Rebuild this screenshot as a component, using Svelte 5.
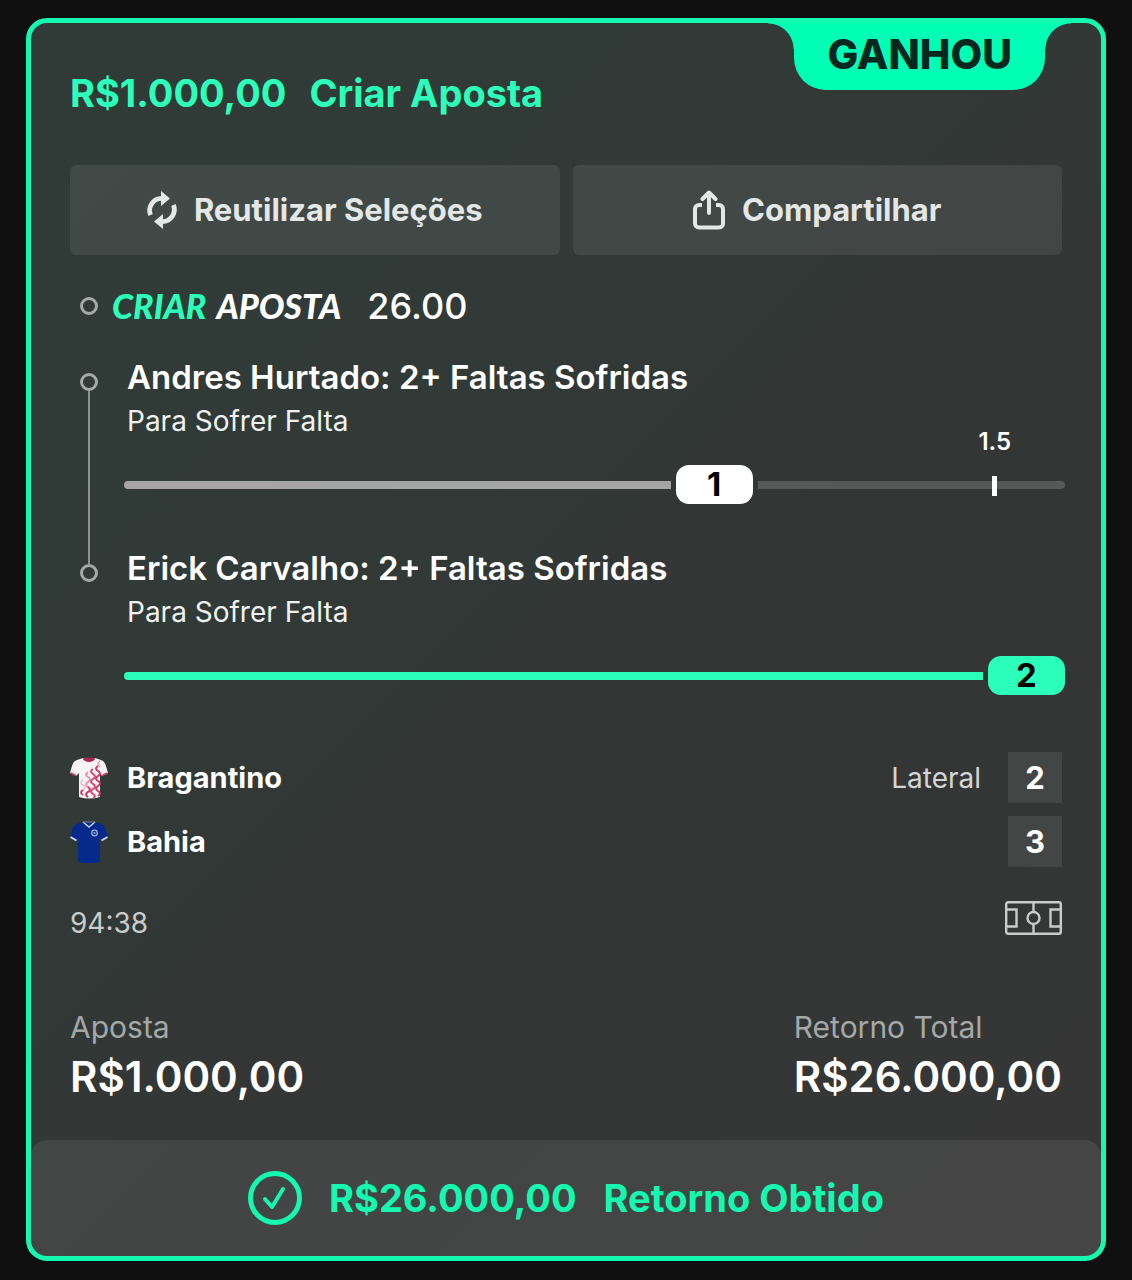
<script lang="ts">
  interface Selection {
    title: string;
    market: string;
    value: number;
    progress: number;
    won: boolean;
    line?: { label: string; position: number };
  }

  const selections: Selection[] = [
    {
      title: 'Andres Hurtado: 2+ Faltas Sofridas',
      market: 'Para Sofrer Falta',
      value: 1,
      progress: 64,
      won: false,
      line: { label: '1.5', position: 77 }
    },
    {
      title: 'Erick Carvalho: 2+ Faltas Sofridas',
      market: 'Para Sofrer Falta',
      value: 2,
      progress: 100,
      won: true
    }
  ];

  const stake = 'R$1.000,00';
  const returns = 'R$26.000,00';
</script>

<article class="bet-card">
  <div class="status-tab">GANHOU</div>

  <div class="content">
    <h1 class="heading">
      <span>{stake}</span>
      <span>Criar Aposta</span>
    </h1>

    <div class="actions">
      <button type="button" class="action">
        <svg class="icon-reuse" viewBox="0 0 30 38" aria-hidden="true">
          <g fill="none" stroke="currentColor" stroke-width="4.800">
            <path d="M3.600 24A12 12 0 0 1 15 7.400" />
            <path d="M26.400 14A12 12 0 0 1 15 30.600" />
          </g>
          <path d="M14 0l9 7.500-9 7.500zM16 23v15l-9-7.500z" fill="currentColor" />
        </svg>
        Reutilizar Seleções
      </button>
      <button type="button" class="action">
        <svg
          class="icon-share"
          viewBox="0 0 32 40"
          fill="none"
          stroke="currentColor"
          stroke-width="4"
          stroke-linecap="round"
          stroke-linejoin="round"
          aria-hidden="true"
        >
          <path d="M9 15H6a4 4 0 0 0-4 4v14.500a4 4 0 0 0 4 4h20a4 4 0 0 0 4-4V19a4 4 0 0 0-4-4h-3" stroke-linecap="butt" />
          <path d="M16 23V3.500M9.500 9L16 2.500 22.500 9" />
        </svg>
        Compartilhar
      </button>
    </div>

    <div class="builder">
      <span class="rail"><span class="dot"></span></span>
      <span class="builder-logo"><em>CRIAR</em> <span>APOSTA</span></span>
      <span class="odds">26.00</span>
    </div>

    <ul class="selections">
      {#each selections as selection}
        <li class="selection">
          <div class="rail">
            <span class="dot"></span>
            <span class="rail-line"></span>
          </div>
          <div class="selection-body">
            <h2>{selection.title}</h2>
            <p>{selection.market}</p>
            <div class="meter" class:won={selection.won}>
              <span class="meter-fill" style="flex-grow: {selection.progress}"></span>
              <span class="meter-value">{selection.value}</span>
              {#if selection.progress < 100}
                <span class="meter-rest" style="flex-grow: {100 - selection.progress}">
                  {#if selection.line}
                    <span class="meter-mark" style="left: {selection.line.position}%">
                      <span class="meter-label">{selection.line.label}</span>
                    </span>
                  {/if}
                </span>
              {/if}
            </div>
          </div>
        </li>
      {/each}
    </ul>

    <div class="teams">
      <div class="team">
        <svg class="shirt" viewBox="0 0 38 42" aria-hidden="true">
          <path d="M13 1h12l6 2c3 1 4 3 5 6l2 7-6 3-2-3v24q-11 3-21 0V16l-3 3-6-3 2-7c1-3 2-5 5-6z" fill="#f8f3f4" />
          <path d="M12.500 1.500c2 4.500 11 4.500 13 0Q19-.5 12.500 1.500z" fill="#a9284b" />
          <path d="M.5 16l5.500 2.500M37.500 16L32 18.500" stroke="#d13b62" stroke-width="1.500" />
          <g fill="none">
            <path d="M13 23q-4 2.500 0 5t0 5 0 5" stroke="#f3bccb" stroke-width="1.500" />
            <path d="M18 15q-4 2.500 0 5t0 5 0 5 0 5 0 5" stroke="#ea92aa" stroke-width="1.800" />
            <path d="M23 12q-4 2.500 0 5t0 5 0 5 0 5 0 5 0 4" stroke="#d94a72" stroke-width="2" />
            <path d="M28 9q-4 2.500 0 5t0 5 0 5 0 5 0 5 0 5" stroke="#d23964" stroke-width="2" />
            <path d="M30 4q-4 3 0 6" stroke="#e58aa2" stroke-width="1.200" />
            <path d="M13 33q-4 2.500 0 5M18 30q4 2.500 0 5t0 5" stroke="#d23964" stroke-width="1.800" />
          </g>
        </svg>
        <strong>Bragantino</strong>
        <span class="event">Lateral</span>
        <span class="score">2</span>
      </div>
      <div class="team">
        <svg class="shirt" viewBox="0 0 38 42" aria-hidden="true">
          <path d="M13 1h12l6 2c3 1 4 3 5 6l2 7-6 4-2-3v24q-11 2-22 0V17l-2 3-6-4 2-7c1-3 2-5 5-6z" fill="#06298c" />
          <path d="M.5 16l6 3.500M37.500 16l-6 3.500" stroke="#c8d5ef" stroke-width="2" />
          <path d="M13 1l6 5 6-5" fill="none" stroke="#c8d5ef" stroke-width="1.500" />
          <path d="M13 1h12" stroke="#7c8594" />
          <circle cx="24.500" cy="12" r="2.800" fill="none" stroke="#a5b8e6" stroke-width="1.200" />
          <circle cx="24.500" cy="12" r="1" fill="#a5b8e6" />
        </svg>
        <strong>Bahia</strong>
        <span class="score">3</span>
      </div>
    </div>

    <div class="match">
      <time>94:38</time>
      <svg
        class="pitch"
        viewBox="0 0 57 34"
        fill="none"
        stroke="currentColor"
        stroke-width="2.400"
        role="img"
        aria-label="Campo"
      >
        <rect x="1.200" y="1.200" width="54.600" height="31.600" rx="2" />
        <path d="M1 8.500h10.500v17H1M56 8.500H45.500v17H56M28.500 1v10M28.500 23v10" />
        <circle cx="28.500" cy="17" r="6" />
      </svg>
    </div>

    <dl class="totals">
      <div>
        <dt>Aposta</dt>
        <dd>{stake}</dd>
      </div>
      <div>
        <dt>Retorno Total</dt>
        <dd>{returns}</dd>
      </div>
    </dl>
  </div>

  <footer class="result">
    <svg
      class="icon-check"
      viewBox="0 0 54 54"
      fill="none"
      stroke="currentColor"
      stroke-linecap="round"
      stroke-linejoin="round"
      aria-hidden="true"
    >
      <circle cx="27" cy="27" r="24.500" stroke-width="5" />
      <path d="M17 28l7 8 11-18" stroke-width="4" />
    </svg>
    <span>{returns}</span>
    <span>Retorno Obtido</span>
  </footer>
</article>

<style>
  :global(body) {
    background: #101010;
  }

  .bet-card {
    --green: #00ffb4;
    --mint: #2bffb9;
    --panel: rgba(255, 255, 255, 0.08);

    position: relative;
    margin: 18px 26px 19px;
    border: 5px solid #14f8b0;
    border-radius: 21px;
    background: linear-gradient(135deg, #303b38 0%, #313a37 35%, #333635 55%, #363636 100%);
    color: #fff;
    font-family: Inter, 'Liberation Sans', sans-serif;
    font-size: 28px;
    line-height: 36px;
  }

  .status-tab {
    position: absolute;
    top: 0;
    right: 56px;
    padding: 3px 33px 8px;
    border-radius: 0 0 32px 32px;
    background: var(--green);
    color: #08281f;
    font-size: 41px;
    font-weight: 800;
    line-height: 56px;
  }

  .status-tab::before,
  .status-tab::after {
    content: '';
    position: absolute;
    top: 0;
    width: 26px;
    height: 26px;
  }

  .status-tab::before {
    right: 100%;
    background: radial-gradient(circle at 0 100%, transparent 25px, var(--green) 26px);
  }

  .status-tab::after {
    left: 100%;
    background: radial-gradient(circle at 100% 100%, transparent 25px, var(--green) 26px);
  }

  .content {
    padding: 46px 39px 35px;
  }

  .heading {
    display: flex;
    gap: 23px;
    margin: 0;
    color: var(--mint);
    font-size: 38px;
    font-weight: 700;
    line-height: 48px;
  }

  .actions {
    display: grid;
    grid-template-columns: 1fr 1fr;
    gap: 13px;
    margin-top: 48px;
  }

  .action {
    display: flex;
    align-items: center;
    justify-content: center;
    gap: 17px;
    height: 90px;
    padding: 0;
    border: 0;
    border-radius: 6px;
    background: var(--panel);
    color: #e3e7e6;
    font: inherit;
    font-size: 31px;
    font-weight: 700;
    cursor: pointer;
  }

  .action:hover {
    background: rgba(255, 255, 255, 0.12);
  }

  .icon-reuse {
    width: 30px;
    height: 38px;
  }

  .icon-share {
    width: 32px;
    height: 40px;
  }

  .rail {
    display: flex;
    flex-direction: column;
    align-items: center;
    width: 38px;
  }

  .dot {
    box-sizing: border-box;
    width: 18px;
    height: 18px;
    border: 3px solid #a5aaa8;
    border-radius: 50%;
  }

  .rail-line {
    flex: 1;
    width: 2px;
    margin-bottom: -18px;
    background: #8b928f;
  }

  .builder {
    display: flex;
    align-items: center;
    margin-top: 29px;
    line-height: 44px;
  }

  .builder-logo {
    display: flex;
    gap: 10px;
    margin: 0 26px 0 4px;
    font-family: Lato, sans-serif;
    font-size: 34px;
    font-style: italic;
    font-weight: 900;
  }

  .builder-logo em {
    color: var(--mint);
  }

  .odds {
    font-size: 36px;
    font-weight: 500;
  }

  .selections {
    margin: 27px 0 0;
    padding: 0;
    list-style: none;
  }

  .selection {
    display: grid;
    grid-template-columns: 38px 1fr;
    gap: 19px;
  }

  .selection .rail {
    padding-top: 18px;
  }

  .selection:last-child .rail-line {
    display: none;
  }

  .selection-body {
    padding-bottom: 42px;
  }

  .selection:last-child .selection-body {
    padding-bottom: 0;
  }

  h2 {
    margin: 0;
    font-size: 33px;
    font-weight: 600;
    line-height: 44px;
  }

  p {
    margin: 4px 0 26px;
    color: #f0f2f1;
  }

  .meter {
    display: flex;
    align-items: center;
    gap: 5px;
    margin: 0 -3px;
  }

  .meter-fill,
  .meter-rest {
    flex-basis: 0;
    height: 8px;
  }

  .meter-fill {
    border-radius: 4px 0 0 4px;
    background: #a5a5a5;
  }

  .meter-rest {
    position: relative;
    border-radius: 0 4px 4px 0;
    background: #575959;
  }

  .meter-value {
    width: 77px;
    border-radius: 13px;
    background: #fff;
    color: #000;
    font-size: 33px;
    font-weight: 700;
    line-height: 39px;
    text-align: center;
  }

  .won .meter-fill,
  .won .meter-value {
    background: var(--mint);
  }

  .meter-mark {
    position: absolute;
    top: -5px;
    width: 5px;
    height: 20px;
    margin-left: -2px;
    display: flex;
    justify-content: center;
    background: #fff;
  }

  .meter-label {
    position: absolute;
    bottom: 100%;
    padding-bottom: 20px;
    font-size: 24px;
    font-weight: 600;
    line-height: 28px;
  }

  .teams {
    display: grid;
    gap: 13px;
    margin-top: 57px;
  }

  .team {
    display: flex;
    align-items: center;
  }

  .team strong {
    flex: 1;
    margin-left: 19px;
    font-size: 29px;
    font-weight: 700;
  }

  .shirt {
    width: 38px;
    height: 42px;
  }

  .event {
    margin-right: 27px;
    color: #d4d6d5;
  }

  .score {
    width: 54px;
    background: var(--panel);
    font-size: 31px;
    font-weight: 700;
    line-height: 51px;
    text-align: center;
  }

  .match {
    display: flex;
    justify-content: space-between;
    align-items: flex-start;
    margin-top: 34px;
    color: #c9cccb;
    line-height: 44px;
  }

  .pitch {
    width: 57px;
    height: 34px;
  }

  .totals {
    display: flex;
    justify-content: space-between;
    margin: 64px 0 0;
  }

  dt {
    color: #a4a8a7;
    font-size: 30px;
  }

  dd {
    margin: 4px 0 0;
    font-size: 42px;
    font-weight: 600;
    line-height: 56px;
  }

  .result {
    display: flex;
    align-items: center;
    justify-content: center;
    gap: 27px;
    height: 116px;
    border-radius: 16px;
    background: var(--panel);
    color: #14f8b0;
    font-size: 38px;
    font-weight: 700;
  }

  .icon-check {
    width: 54px;
    height: 54px;
  }
</style>
